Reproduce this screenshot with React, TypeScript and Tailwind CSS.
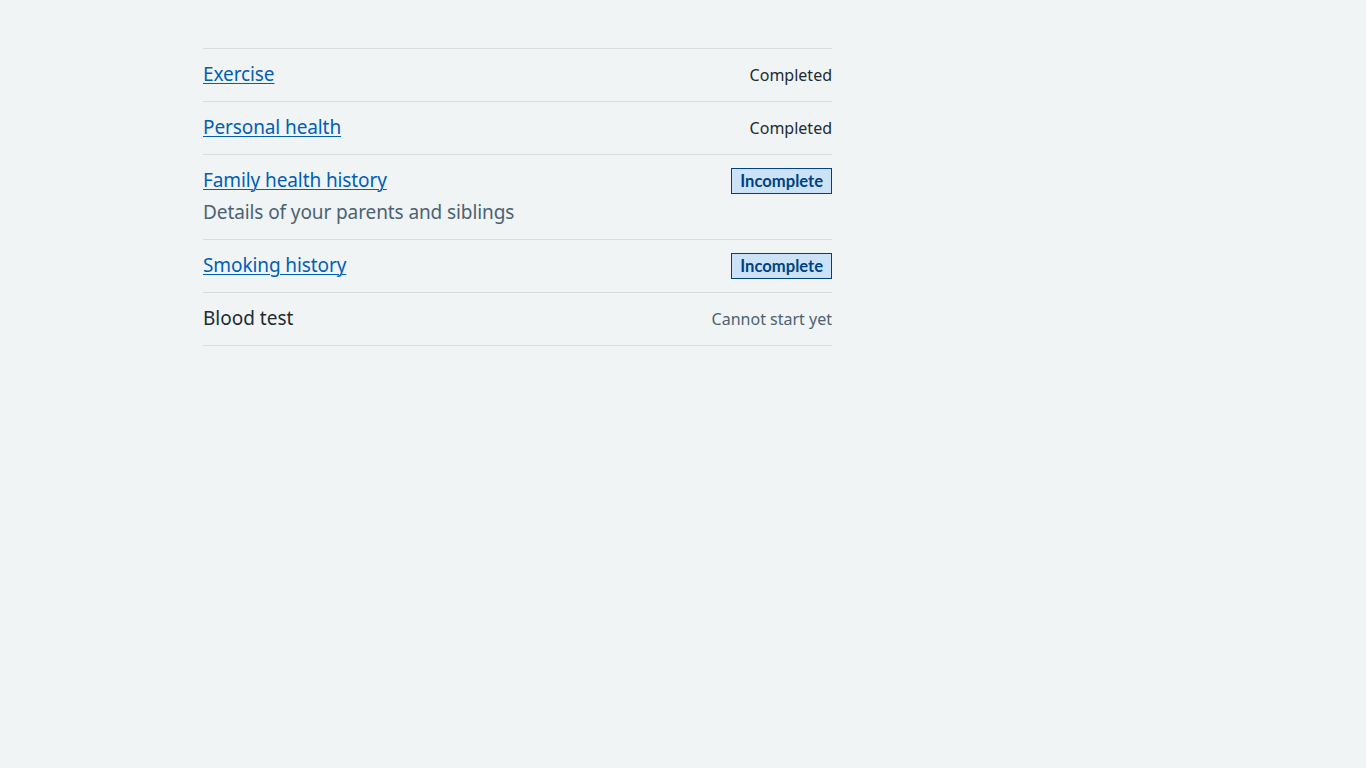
import React from "react";

type Item = {
  label: string;
  href?: boolean;
  hint?: string;
  status: "completed" | "incomplete" | "cannot";
};

const items: Item[] = [
  { label: "Exercise", href: true, status: "completed" },
  { label: "Personal health", href: true, status: "completed" },
  {
    label: "Family health history",
    href: true,
    hint: "Details of your parents and siblings",
    status: "incomplete",
  },
  { label: "Smoking history", href: true, status: "incomplete" },
  { label: "Blood test", status: "cannot" },
];

function Status({ s }: { s: Item["status"] }) {
  if (s === "completed")
    return <span className="mt-[3px] text-[16px] leading-[24px] text-[#212b32]">Completed</span>;
  if (s === "cannot")
    return <span className="mt-[3px] text-[16px] leading-[24px] text-[#4c6272]">Cannot start yet</span>;
  return (
    <span
      className="mt-[2px] inline-block border border-[#004281] bg-[#cce2f6] px-[8px] py-[4px] text-[16.6px] font-bold leading-[16px] text-[#004281]"
      style={{ fontFamily: "Lato, 'Noto Sans', sans-serif" }}
    >
      Incomplete
    </span>
  );
}

export default function App() {
  return (
    <div
      className="min-h-screen bg-[#f0f4f5] pt-[48px]"
      style={{ fontFamily: '"Noto Sans", Arial, sans-serif' }}
    >
      <div className="mx-auto w-[960px]">
        <ul className="w-[629px] border-t border-[#d8dde0]">
          {items.map((it) => (
            <li
              key={it.label}
              className="flex items-start justify-between border-b border-[#d8dde0] pt-[11px] pb-[13px]"
            >
              <div className="flex flex-col">
                {it.href ? (
                  <a
                    href="#"
                    className="text-[19px] leading-[28px] tracking-[-0.1px] text-[#005eb8] underline decoration-1 underline-offset-[2px]"
                  >
                    {it.label}
                  </a>
                ) : (
                  <span className="text-[19px] leading-[28px] text-[#212b32]">{it.label}</span>
                )}
                {it.hint && (
                  <span className="mt-[4px] text-[19px] leading-[28px] tracking-[-0.1px] text-[#4c6272]">{it.hint}</span>
                )}
              </div>
              <Status s={it.status} />
            </li>
          ))}
        </ul>
      </div>
    </div>
  );
}
